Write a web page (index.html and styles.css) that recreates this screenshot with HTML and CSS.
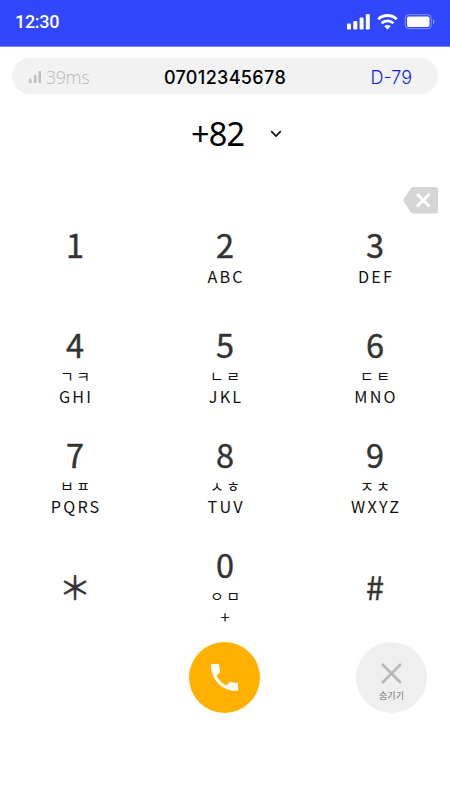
FILE: index.html
```html
<!DOCTYPE html>
<html lang="ko">
<head>
    <meta charset="UTF-8">
    <meta name="viewport" content="width=device-width, initial-scale=1.0">
    <title>Dialer</title>
    <link rel="stylesheet" href="styles.css">
</head>
<body>

<header class="status-bar">
    <span class="time">12:30</span>
    <svg class="status-icons" width="90" height="18" viewBox="0 0 90 18">
        <g fill="#fff">
            <rect x="0" y="10.500" width="4" height="6" rx="1.200"/>
            <rect x="6.300" y="8" width="4" height="8.500" rx="1.200"/>
            <rect x="12.600" y="4.500" width="4" height="12" rx="1.200"/>
            <rect x="18.800" y="1" width="4" height="15.500" rx="1.200"/>
            <path d="M40.500 16.500l-3.200-3.300a4.600 4.600 0 0 1 6.400 0z"/>
            <rect x="60" y="3.500" width="22.500" height="10.500" rx="1.800"/>
        </g>
        <g fill="none" stroke="#fff" stroke-width="2.800">
            <path d="M31.300 6.200a13.300 13.300 0 0 1 18.400 0"/>
            <path d="M34.600 10.200a8.700 8.700 0 0 1 11.800 0"/>
        </g>
        <rect x="58.300" y="1.700" width="26" height="14" rx="3.500" fill="none" stroke="#fff" stroke-opacity=".4"/>
        <path d="M86 6.300c2 .8 2 4.200 0 5z" fill="#fff" fill-opacity=".45"/>
    </svg>
</header>

<div class="info">
    <div class="ping">
        <svg width="13" height="12" viewBox="0 0 13 12" fill="#bfbfbf">
            <rect x="0" y="7.500" width="2.500" height="4.500"/>
            <rect x="5" y="4" width="2.500" height="8"/>
            <rect x="9.500" y="0" width="2.500" height="12"/>
        </svg>
        <span>39ms</span>
    </div>
    <div class="number">07012345678</div>
    <div class="dday">D-79</div>
</div>

<div class="country">
    <span>+82</span>
    <svg width="12" height="8" viewBox="0 0 12 8" fill="none" stroke="#111" stroke-width="1.700">
        <path d="M1.200 1.200L6 6l4.800-4.800"/>
    </svg>
</div>

<div class="erase">
    <svg width="35" height="27" viewBox="0 0 35 27">
        <path d="M10 0H32.500A2.500 2.500 0 0 1 35 2.500V24a2.500 2.500 0 0 1-2.500 2.500H10a2.500 2.500 0 0 1-2-1L0.800 14.500a2 2 0 0 1 0-2.400L8 1a2.500 2.500 0 0 1 2-1z" fill="#d5d5d5"/>
        <path d="M14 7l12.500 12.500M26.500 7L14 19.500" stroke="#fff" stroke-width="3.100"/>
    </svg>
</div>

<main class="keypad">
    <div class="key"><b>1</b></div>
    <div class="key"><b>2</b><span>ABC</span></div>
    <div class="key"><b>3</b><span>DEF</span></div>
    <div class="key"><b>4</b><i>ㄱㅋ</i><span>GHI</span></div>
    <div class="key"><b>5</b><i>ㄴㄹ</i><span>JKL</span></div>
    <div class="key"><b>6</b><i>ㄷㅌ</i><span>MNO</span></div>
    <div class="key"><b>7</b><i>ㅂㅍ</i><span>PQRS</span></div>
    <div class="key"><b>8</b><i>ㅅㅎ</i><span>TUV</span></div>
    <div class="key"><b>9</b><i>ㅈㅊ</i><span>WXYZ</span></div>
    <div class="key symbol"><b>＊</b></div>
    <div class="key"><b>0</b><i>ㅇㅁ</i><span>+</span></div>
    <div class="key symbol"><b>#</b></div>
</main>

<footer class="actions">
    <button class="round call">
        <svg width="27" height="27" viewBox="3 3 18 18" fill="#fff">
            <path d="M6.620 10.790c1.440 2.830 3.760 5.140 6.590 6.590l2.200-2.200c.27-.27.67-.36 1.020-.24 1.120.37 2.330.57 3.570.57.55 0 1 .1 1 .5V20.500c0 .3-.2.500-1 .5-9.390 0-17-7.610-17-17 0-.8.200-1 .5-1h4.500c.4 0 .5.450.5 1 0 1.250.2 2.450.57 3.570.11.35.03.74-.25 1.020l-2.200 2.200z"/>
        </svg>
    </button>
    <button class="round hide">
        <svg width="21" height="21" viewBox="0 0 21 21" stroke="#b9b9b9" stroke-width="2.600">
            <path d="M1 1l19 19M20 1L1 20"/>
        </svg>
        <span>숨기기</span>
    </button>
</footer>

</body>
</html>
```

FILE: styles.css
```css
* {
    box-sizing: border-box;
}
body {
    margin: 0;
    height: 800px;
    overflow: hidden;
    background: #fff;
    color: #111;
    font-family: "Noto Sans CJK KR", "Noto Sans", sans-serif;
}
.status-bar {
    display: flex;
    justify-content: space-between;
    height: 47px;
    padding: 13px 13px 0 15px;
    background: #3047fb;
    border-bottom: 1px solid #7685fc;
}
.time {
    color: #fff;
    font: 500 18px/18px Roboto, sans-serif;
    letter-spacing: -0.3px;
}
.info {
    display: grid;
    grid-template-columns: 1fr auto 1fr;
    align-items: center;
    height: 36px;
    margin: 11px 12px 0;
    padding: 2px 26px 0 17px;
    border-radius: 18px;
    background: #f2f2f2;
    font: 18px/34px Inter, sans-serif;
}
.ping {
    display: flex;
    align-items: center;
    gap: 4px;
    padding-bottom: 2px;
    color: #bfbfbf;
    font-family: "Noto Sans", sans-serif;
    font-weight: 350;
    letter-spacing: -0.5px;
}
.number {
    padding: 0 0 1px 9px;
    color: #000;
    font-weight: 500;
    letter-spacing: 0.35px;
}
.dday {
    padding-bottom: 1px;
    color: #0a1df0;
    font-weight: 300;
    text-align: right;
}
.country {
    display: flex;
    align-items: center;
    gap: 26px;
    height: 78px;
    padding: 1px 0 0 191px;
    color: #000;
    font: 32.5px/77px "Noto Sans", sans-serif;
    letter-spacing: -0.9px;
}
.erase {
    display: flex;
    justify-content: flex-end;
    height: 48px;
    padding: 15px 12px 0 0;
}
.keypad {
    display: grid;
    grid-template-columns: repeat(3, 150px);
    grid-template-rows: 100px 110px 110px 95px;
    padding-top: 7px;
}
.key {
    display: flex;
    flex-direction: column;
    align-items: center;
}
.key b {
    color: #333;
    font-size: 32.5px;
    font-weight: 400;
    line-height: 34px;
    -webkit-text-stroke: 0.4px #333;
}
.key i {
    height: 20px;
    margin-right: -2.6px;
    font-size: 15px;
    font-style: normal;
    font-weight: 400;
    line-height: 20px;
    letter-spacing: 2.6px;
}
.key span {
    margin-right: -2.2px;
    font-size: 16.2px;
    line-height: 20px;
    letter-spacing: 2.2px;
}
.key b + i,
.key b + span {
    margin-top: 5px;
}
.symbol {
    padding-top: 22px;
}
.actions {
    display: grid;
    grid-template-columns: 260px 167px;
    justify-items: end;
}
.round {
    display: flex;
    flex-direction: column;
    align-items: center;
    justify-content: center;
    width: 71px;
    height: 71px;
    padding: 0;
    border: none;
    border-radius: 50%;
    cursor: pointer;
}
.call {
    background: #ffb000;
}
.hide {
    padding-top: 10px;
    background: #efefef;
}
.hide span {
    margin-top: 5px;
    color: #777;
    font: 9px/14px "Noto Sans CJK KR", sans-serif;
}
```
